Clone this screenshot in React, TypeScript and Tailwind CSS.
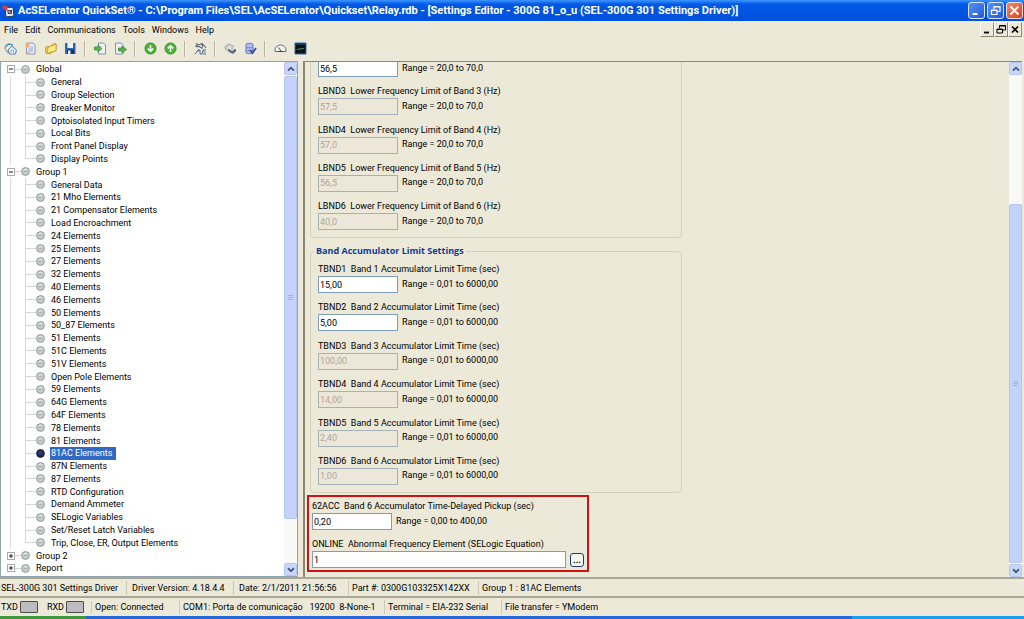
import type { ReactNode } from 'react'

const globalItems = [
  'General', 'Group Selection', 'Breaker Monitor', 'Optoisolated Input Timers',
  'Local Bits', 'Front Panel Display', 'Display Points',
]

const groupItems = [
  'General Data', '21 Mho Elements', '21 Compensator Elements', 'Load Encroachment',
  '24 Elements', '25 Elements', '27 Elements', '32 Elements', '40 Elements', '46 Elements',
  '50 Elements', '50_87 Elements', '51 Elements', '51C Elements', '51V Elements',
  'Open Pole Elements', '59 Elements', '64G Elements', '64F Elements', '78 Elements',
  '81 Elements', '81AC Elements', '87N Elements', '87 Elements', 'RTD Configuration',
  'Demand Ammeter', 'SELogic Variables', 'Set/Reset Latch Variables',
  'Trip, Close, ER, Output Elements',
]

const selectedItem = '81AC Elements'

type FieldData = { id: string; label: string; value: string; enabled?: boolean }

const lowerLimits: FieldData[] = [
  { id: 'LBND3', label: 'Lower Frequency Limit of Band 3 (Hz)', value: '57,5' },
  { id: 'LBND4', label: 'Lower Frequency Limit of Band 4 (Hz)', value: '57,0' },
  { id: 'LBND5', label: 'Lower Frequency Limit of Band 5 (Hz)', value: '56,5' },
  { id: 'LBND6', label: 'Lower Frequency Limit of Band 6 (Hz)', value: '40,0' },
]

const accumulators: FieldData[] = [
  { id: 'TBND1', label: 'Band 1 Accumulator Limit Time (sec)', value: '15,00', enabled: true },
  { id: 'TBND2', label: 'Band 2 Accumulator Limit Time (sec)', value: '5,00', enabled: true },
  { id: 'TBND3', label: 'Band 3 Accumulator Limit Time (sec)', value: '100,00' },
  { id: 'TBND4', label: 'Band 4 Accumulator Limit Time (sec)', value: '14,00' },
  { id: 'TBND5', label: 'Band 5 Accumulator Limit Time (sec)', value: '2,40' },
  { id: 'TBND6', label: 'Band 6 Accumulator Limit Time (sec)', value: '1,00' },
]

const inputClass =
  'h-[17px] border border-[#7f9db9] bg-white px-px text-black outline-none disabled:border-[#a3b2b8] disabled:bg-[#ece7d8] disabled:text-[#aca899]'

function ValueRow({ id, value, range, enabled, name }: { id: string; value: string; range: string; enabled?: boolean; name?: string }) {
  return (
    <div className="flex items-center gap-1">
      <input id={id} aria-label={name} defaultValue={value} disabled={!enabled} className={`w-[80px] ${inputClass}`} />
      <span className="pb-[2px] leading-[10px]">Range = {range}</span>
    </div>
  )
}

function Field({ id, label, value, enabled, range }: FieldData & { range: string }) {
  return (
    <div>
      <label htmlFor={id} className="block h-[13px] leading-[12px] whitespace-pre">{`${id}  ${label}`}</label>
      <ValueRow id={id} value={value} range={range} enabled={enabled} />
    </div>
  )
}

function Bullet({ active }: { active?: boolean }) {
  return (
    <svg viewBox="0 0 9 9" className="size-[9px] shrink-0">
      <circle cx="4.5" cy="4.5" r="3.9" fill={active ? '#1b2a55' : '#c6cfc9'} stroke={active ? '#141c38' : '#8a938e'} strokeWidth="0.9" />
      <path d="M2.4 4.6h4.2" stroke={active ? '#46598c' : '#98a39d'} strokeWidth="0.7" />
      <path d="M2.6 3a2.6 2.6 0 0 1 3.8 0" fill="none" stroke={active ? '#41518a' : '#eef2ef'} strokeWidth="0.8" />
    </svg>
  )
}

function Branch({ label, open }: { label: string; open?: boolean }) {
  return (
    <li className="flex min-h-0 flex-1 items-center">
      <button aria-label={`Toggle ${label}`} className="ml-[6px] flex size-[8px] shrink-0 items-center justify-center border border-[#a9a9a9] bg-white">
        <svg viewBox="0 0 6 6" className="size-[6px]">
          <path d={open ? 'M1 3h4' : 'M1 3h4M3 1v4'} stroke="#222" strokeWidth="1" />
        </svg>
      </button>
      <span className="h-px w-[6px] bg-[#d4d4d4]" />
      <Bullet />
      <button className="ml-[5px] px-px leading-[12px] whitespace-nowrap">{label}</button>
    </li>
  )
}

function Leaf({ label, last }: { label: string; last?: boolean }) {
  const active = label === selectedItem
  return (
    <li className="flex min-h-0 flex-1 items-center">
      <span className="ml-[9px] w-[15px] self-stretch border-l border-[#dcdcdc]" />
      <span className="flex w-[11px] flex-col self-stretch">
        <span className="flex-1 border-b border-l border-[#d8d8d8]" />
        <span className={last ? 'flex-1' : 'flex-1 border-l border-[#d8d8d8]'} />
      </span>
      <Bullet active={active} />
      <button className={active ? 'ml-[5px] self-stretch bg-[#316ac5] pr-1 pl-px leading-[12px] whitespace-nowrap text-white' : 'ml-[5px] px-px leading-[12px] whitespace-nowrap'}>
        {label}
      </button>
    </li>
  )
}

function ScrollButton({ down }: { down?: boolean }) {
  return (
    <button type="button" aria-label={down ? 'Scroll down' : 'Scroll up'} className="flex h-[13px] shrink-0 items-center justify-center rounded-[2px] border border-[#b4c6f0] bg-[#c8d7fb]">
      <svg viewBox="0 0 8 6" className="h-[6px] w-[8px]">
        <path d={down ? 'M1 1.2l3 3 3-3' : 'M1 4.6l3-3 3 3'} fill="none" stroke="#3f547e" strokeWidth="1.7" />
      </svg>
    </button>
  )
}

function ScrollBar({ above, below }: { above: string; below: string }) {
  return (
    <div className="flex w-[13px] shrink-0 flex-col bg-[#f8f8f4]">
      <ScrollButton />
      <div className={above} />
      <div className="flex min-h-0 flex-1 flex-col items-center justify-center gap-px rounded-[2px] border border-[#b4c6f0] bg-[#c3d3fc]">
        <span className="h-px w-[5px] bg-[#9db4e8]" />
        <span className="h-px w-[5px] bg-[#9db4e8]" />
        <span className="h-px w-[5px] bg-[#9db4e8]" />
      </div>
      <div className={below} />
      <ScrollButton down />
    </div>
  )
}

function Tool({ name, children }: { name: string; children: ReactNode }) {
  return (
    <button aria-label={name} className="flex w-[20px] items-center justify-center">
      <svg viewBox="0 0 13 13" className="size-[13px]" fill="none">{children}</svg>
    </button>
  )
}

function Divider() {
  return <span className="mx-1 h-[16px] w-[2px] border-l border-[#b9b5a2] bg-[#f6f4ea]" />
}

function Toolbar() {
  return (
    <div className="flex h-[23px] shrink-0 items-center pb-[2px]">
      <Tool name="Connect">
        <path d="M1 7c0-3 2-5 5-5" stroke="#8fa6b5" strokeWidth="1.600" />
        <path d="M1.500 4.500L5 2l4 1" stroke="#4b96c4" strokeWidth="1.400" />
        <path d="M1.500 7.500l3 3.500" stroke="#9aa9b2" strokeWidth="1.600" />
        <path d="M4 8l4-4 4.500 4-1 4H5.500z" fill="#dbe9f3" stroke="#4d86b3" />
        <path d="M7 8.500h2.500V12H7z" fill="#fff" stroke="#7fa3bf" strokeWidth=".7" />
      </Tool>
      <Tool name="New">
        <path d="M2.500 1h6.500l2 2v9H2.500z" fill="#e9edf8" stroke="#8e98bb" />
        <path d="M1.500 1.500h4v4h-4z" fill="#efae74" />
        <path d="M4.500 7h4.500M4.500 9h4.500M6.500 5h2.500" stroke="#8fa3d2" />
        <path d="M3 10h3v2H3z" fill="#e3b491" />
      </Tool>
      <Tool name="Open">
        <path d="M1.500 5.500L4 4l1 1 5.500-3.500L12 2v6.500L6 11.500H2z" fill="#f2cf4a" stroke="#b98d1c" strokeWidth=".8" />
        <path d="M4 5.500L12 2v6.500L3 11.500z" fill="#fbe88b" stroke="#c99c24" strokeWidth=".8" />
      </Tool>
      <Tool name="Save">
        <path d="M1 1h10.500v11H1z" fill="#2f66b3" />
        <path d="M3.500 1h5.500v5H3.500z" fill="#eef4fb" />
        <path d="M3 7.500h7V12H3z" fill="#17396e" />
        <path d="M4 8.500h2.500V12H4z" fill="#e4ecf6" />
      </Tool>
      <Divider />
      <Tool name="Import">
        <path d="M4.500 1h5l2 2v9h-7z" fill="#eef1f8" stroke="#8393b0" />
        <path d="M0.500 5h3.500V3L8 6.500 4 10V8H.5z" fill="#58b647" stroke="#2c8228" strokeWidth=".7" />
      </Tool>
      <Tool name="Export">
        <path d="M1.500 1h5.500l2 2v9H1.500z" fill="#eef1f8" stroke="#8393b0" />
        <path d="M4.500 6H8V4l4.500 3.500L8 11V9H4.500z" fill="#58b647" stroke="#2c8228" strokeWidth=".7" />
      </Tool>
      <Divider />
      <Tool name="Read">
        <circle cx="6.500" cy="6.500" r="5.500" fill="#4fb436" stroke="#2f8e22" />
        <path d="M6.500 3v6M3.800 6.600l2.700 2.700 2.700-2.700" stroke="#fff" strokeWidth="1.500" />
      </Tool>
      <Tool name="Send">
        <circle cx="6.500" cy="6.500" r="5.500" fill="#4fb436" stroke="#2f8e22" />
        <path d="M6.500 10V4M3.800 6.400l2.700-2.700 2.700 2.700" stroke="#fff" strokeWidth="1.500" />
      </Tool>
      <Divider />
      <Tool name="Search text">
        <path d="M2 1.500l3 1.500 3-1.500 2.500 2.500 1.500 2M1 4l4 .5 3.500 2M8 1.500l.5 4M3 2.500v3" stroke="#5c6472" strokeWidth="1.100" />
        <path d="M1 12l4-5M3 9.500l3-1.500v4h2l1-4h3M9 12h3M9.500 9.500l2 1" stroke="#4b6892" />
      </Tool>
      <Divider />
      <Tool name="Device">
        <path d="M1 4.500L5 2l5 2.500v3L6 10 1.500 7.500z" fill="#d3d5d2" stroke="#a3a7a4" />
        <path d="M4 7l6-1 2 1.500v2L9 12 5 10z" fill="#5f7181" />
        <path d="M5 5.500l3 2.500L11.500 5" stroke="#f1f4f4" strokeWidth="1.500" />
      </Tool>
      <Tool name="Database">
        <path d="M2 2.500c0-1.600 7-1.600 7 0v8c0 1.600-7 1.600-7 0z" fill="#aebcf0" stroke="#6476c0" />
        <path d="M2 5c1 1 6 1 7 0M2 8c1 1 6 1 7 0" stroke="#7384cc" />
        <path d="M6 8l2.500 3L12 6" stroke="#35508f" strokeWidth="1.800" />
      </Tool>
      <Divider />
      <Tool name="Meter">
        <path d="M1 9.500V8a5.500 5 0 0 1 11 0v1.500z" fill="#f3f3f0" stroke="#697079" />
        <path d="M7 9L4.500 5.500M4 9.500h5" stroke="#3f464f" />
      </Tool>
      <Tool name="Terminal">
        <path d="M1 1h11v11H1z" fill="#08131c" stroke="#2d6d9a" />
        <path d="M2 2h9" stroke="#1d5d8f" />
        <path d="M3 7.500h1.500l1-1.500 1 2 1-1.500H10" stroke="#3d8f5d" />
      </Tool>
    </div>
  )
}

function TitleBar() {
  return (
    <header className="flex h-[21px] shrink-0 items-center gap-[3px] bg-linear-to-b from-[#3d95ff] via-[#0058e6] via-20% to-[#0050d8] pr-px pl-[2px]">
      <svg viewBox="0 0 13 14" className="h-[14px] w-[13px]">
        <path d="M3 4l8-1 1 9-8 1z" fill="#e8edf6" stroke="#26344f" />
        <path d="M5 6h5v4H6z" fill="#3b4861" />
        <path d="M6.500 7l2 2" stroke="#fff" />
        <path d="M0 1l3 1 1-2 1 3 2 0-2 2 0 2-2-2-3 1 1-2z" fill="#e33a32" />
      </svg>
      <h1 className="min-w-0 flex-1 truncate text-[11px] leading-[16px] font-bold whitespace-nowrap text-white">
        AcSELerator QuickSet® - C:\Program Files\SEL\AcSELerator\Quickset\Relay.rdb - [Settings Editor - 300G 81_o_u (SEL-300G 301 Settings Driver)]
      </h1>
      <div className="flex gap-[2px]">
        <button aria-label="Minimize" className="rounded-[3px] border border-[#dbe6fb] bg-linear-to-br from-[#5b8ff2] to-[#2058d8]">
          <svg viewBox="0 0 15 15" className="size-[15px]"><path d="M3.500 11h5" stroke="#fff" strokeWidth="2" /></svg>
        </button>
        <button aria-label="Restore" className="rounded-[3px] border border-[#dbe6fb] bg-linear-to-br from-[#5b8ff2] to-[#2058d8]">
          <svg viewBox="0 0 15 15" className="size-[15px]" fill="none" stroke="#fff"><path d="M6 6V3.500h6v5H9.500M6 4h6M3.500 7h5.500v4.500H3.500zM3.500 7.500H9" strokeWidth="1.200" /></svg>
        </button>
        <button aria-label="Close" className="rounded-[3px] border border-[#f3dcd6] bg-linear-to-br from-[#ee8a6c] to-[#d0401c]">
          <svg viewBox="0 0 15 15" className="size-[15px]"><path d="M3.500 3.500l8 8M11.500 3.500l-8 8" stroke="#fff" strokeWidth="1.900" /></svg>
        </button>
      </div>
    </header>
  )
}

const childButton = 'border border-t-white border-r-[#8b8878] border-b-[#8b8878] border-l-white bg-[#ece9d8]'

function MenuBar() {
  return (
    <div className="flex h-[17px] shrink-0 items-center justify-between pr-[2px] pl-1">
      <nav className="flex gap-[7px]">
        {['File', 'Edit', 'Communications', 'Tools', 'Windows', 'Help'].map((item) => (
          <button key={item}>{item}</button>
        ))}
      </nav>
      <div className="flex">
        <button aria-label="Minimize document" className={childButton}>
          <svg viewBox="0 0 12 13" className="h-[13px] w-[12px]"><path d="M3 9.500h5" stroke="#000" strokeWidth="1.800" /></svg>
        </button>
        <button aria-label="Restore document" className={childButton}>
          <svg viewBox="0 0 12 13" className="h-[13px] w-[12px]" fill="none" stroke="#000"><path d="M4.500 5V2.500h6v4.500H8M4.500 3h6M2 6h5.500v4H2zM2 6.500h5.500" /></svg>
        </button>
        <button aria-label="Close document" className={childButton}>
          <svg viewBox="0 0 12 13" className="h-[13px] w-[12px]"><path d="M3 3.500l6 6M9 3.500l-6 6" stroke="#000" strokeWidth="1.700" /></svg>
        </button>
      </div>
    </div>
  )
}

function Navigator() {
  return (
    <aside className="flex w-[298px] shrink-0 border border-[#8fa5b2] bg-white">
      <ul className="flex min-w-0 flex-1 flex-col pt-px pb-px">
        <Branch label="Global" open />
        {globalItems.map((item, i) => (
          <Leaf key={item} label={item} last={i === globalItems.length - 1} />
        ))}
        <Branch label="Group 1" open />
        {groupItems.map((item, i) => (
          <Leaf key={item} label={item} last={i === groupItems.length - 1} />
        ))}
        <Branch label="Group 2" />
        <Branch label="Report" />
      </ul>
      <ScrollBar above="h-px" below="h-[44px]" />
    </aside>
  )
}

function SettingsForm() {
  return (
    <main className="flex min-w-0 flex-1 border-t border-l-2 border-[#8a8773]">
      <form className="flex min-w-0 flex-1 flex-col justify-end overflow-hidden pb-[5px] pl-[2px]">
        <div className="mx-[3px] flex h-[179px] w-[372px] shrink-0 flex-col justify-between rounded-[4px] border border-[#d3d0bc] px-[7px] pb-[7px]">
          <ValueRow id="LBND2" name="LBND2" value="56,5" range="20,0 to 70,0" enabled />
          {lowerLimits.map((f) => (
            <Field key={f.id} {...f} range="20,0 to 70,0" />
          ))}
        </div>
        <fieldset className="mx-[3px] mt-[6px] flex h-[249px] w-[372px] shrink-0 flex-col rounded-[4px] border border-[#d3d0bc] px-[7px]">
          <legend className="-ml-[4px] h-[14px] px-[2px] font-['Open_Sans',sans-serif] leading-[14px] font-bold text-[#0a3b9c]">Band Accumulator Limit Settings</legend>
          <div className="mt-[5px] flex h-[222px] flex-col justify-between">
            {accumulators.map((f) => (
              <Field key={f.id} {...f} range="0,01 to 6000,00" />
            ))}
          </div>
        </fieldset>
        <section className="mt-[2px] flex h-[77px] w-[282px] shrink-0 flex-col justify-between border-2 border-[#d01217] px-[3px] pt-[3px] pb-[2px]">
          <Field id="62ACC" label="Band 6 Accumulator Time-Delayed Pickup (sec)" value="0,20" range="0,00 to 400,00" enabled />
          <div>
            <label htmlFor="ONLINE" className="block h-[13px] leading-[12px] whitespace-pre">{'ONLINE  Abnormal Frequency Element (SELogic Equation)'}</label>
            <div className="flex items-center gap-1">
              <input id="ONLINE" defaultValue="1" className={`min-w-0 flex-1 ${inputClass}`} />
              <button type="button" aria-label="Edit equation" className="flex h-[14px] w-[14px] items-center justify-center rounded-[3px] border border-[#1f3f6e] bg-[#f6f5ef] font-bold">...</button>
            </div>
          </div>
        </section>
      </form>
      <ScrollBar above="h-[129px]" below="h-px" />
    </main>
  )
}

function Cell({ width, children }: { width: string; children: ReactNode }) {
  return <div className={`flex h-[14px] shrink-0 items-center gap-1 border-r border-[#cdc9b5] pl-[3px] whitespace-pre ${width}`}>{children}</div>
}

function Lamp({ name }: { name: string }) {
  return (
    <span className="flex items-center gap-[2px]">
      {name}
      <span className="h-[12px] w-[18px] rounded-[1px] border border-[#4c4c4c] bg-[#bdbdc1]" />
    </span>
  )
}

export default function App() {
  return (
    <div className="flex h-screen flex-col overflow-hidden bg-[#ece9d8] font-['Roboto',sans-serif] text-[9px] leading-[12px] text-black">
      <TitleBar />
      <MenuBar />
      <Toolbar />
      <div className="flex min-h-0 flex-1 gap-[5px] pr-[2px]">
        <Navigator />
        <SettingsForm />
      </div>
      <footer className="shrink-0">
        <div className="flex h-[19px] items-center border-t-2 border-[#a9a693]">
          <Cell width="w-[129px] -ml-[2px]">SEL-300G 301 Settings Driver</Cell>
          <Cell width="w-[107px] pl-[5px]">Driver Version: 4.18.4.4</Cell>
          <Cell width="w-[115px] pl-[5px]">Date: 2/1/2011 21:56:56</Cell>
          <Cell width="w-[130px]">Part #: 0300G103325X142XX</Cell>
          <div className="pl-[3px]">Group 1 : 81AC Elements</div>
        </div>
        <div className="flex h-[20px] items-center border-t-2 border-[#a9a693]">
          <div className="flex w-[92px] shrink-0 items-center gap-[9px] border-r border-[#cdc9b5] pl-px">
            <Lamp name="TXD" />
            <Lamp name="RXD" />
          </div>
          <Cell width="w-[88px]">Open: Connected</Cell>
          <Cell width="w-[205px]">{'COM1: Porta de comunicação   19200  8-None-1'}</Cell>
          <Cell width="w-[117px]">Terminal = EIA-232 Serial</Cell>
          <div className="pl-[3px]">File transfer = YModem</div>
        </div>
        <div className="flex h-[3px]">
          <div className="w-[86px] bg-[#3c9a3c]" />
          <div className="flex-1 bg-[#2368dc]" />
          <div className="w-[172px] bg-[#18a0ee]" />
        </div>
      </footer>
    </div>
  )
}
